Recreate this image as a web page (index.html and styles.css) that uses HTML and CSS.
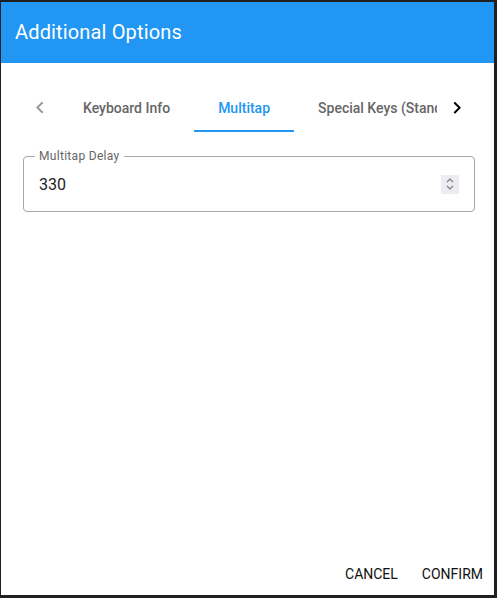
FILE: index.html
```html
<!DOCTYPE html>
<html>
<head>
<meta charset="utf-8">
<link rel="stylesheet" href="styles.css">
</head>
<body>
<div class="dialog">
  <header class="title-bar">
    <h2 class="title">Additional Options</h2>
  </header>
  <div class="content">
    <div class="tabs">
      <div class="scroll-btn disabled">
        <svg width="24" height="24" viewBox="0 0 24 24"><path d="M15.41 16.09l-4.58-4.59 4.58-4.59L14 5.5l-6 6 6 6z" fill="currentColor"/></svg>
      </div>
      <div class="tab-viewport">
        <div class="tab-list">
          <div class="tab">Keyboard Info</div>
          <div class="tab active">Multitap</div>
          <div class="tab">Special Keys (Standard)</div>
        </div>
      </div>
      <div class="scroll-btn">
        <svg width="24" height="24" viewBox="0 0 24 24"><path d="M8.59 16.34l4.58-4.59-4.58-4.59L10 5.75l6 6-6 6z" fill="currentColor"/></svg>
      </div>
    </div>
    <div class="field">
      <span class="field-label">Multitap Delay</span>
      <span class="field-value">330</span>
      <span class="spinner">
        <svg width="10" height="16" viewBox="0 0 10 16"><path d="M2 6L5 3L8 6" fill="none" stroke="#7a7a80" stroke-width="1.2"/><path d="M2 10L5 13L8 10" fill="none" stroke="#7a7a80" stroke-width="1.2"/></svg>
      </span>
    </div>
  </div>
  <footer class="actions">
    <button class="btn">Cancel</button>
    <button class="btn">Confirm</button>
  </footer>
</div>
</body>
</html>
```

FILE: styles.css
```css
* { box-sizing: border-box; }
html, body { margin: 0; padding: 0; background: #fff; }
body { font-family: Roboto, "Noto Sans", sans-serif; }

.dialog {
  width: 497px;
  height: 598px;
  border-style: solid;
  border-color: #1f1f1f;
  border-width: 2px 3px 3px 1px;
  display: flex;
  flex-direction: column;
  background: #fff;
}

.title-bar {
  background: #2196f3;
  height: 61px;
  padding-left: 14px;
  padding-bottom: 2px;
  display: flex;
  align-items: center;
}
.title {
  margin: 0;
  color: #fff;
  font-size: 20px;
  font-weight: 400;
  line-height: 24px;
  letter-spacing: 0.15px;
}

.content {
  flex: 1;
  padding: 21px 17px 0 18px;
}

.tabs {
  display: flex;
  height: 48px;
}
.scroll-btn {
  width: 40px;
  flex: none;
  display: flex;
  align-items: center;
  justify-content: center;
  color: #000;
}
.scroll-btn.disabled { color: #9a9a9a; padding-left: 1px; }
.tab-viewport {
  flex: 1;
  overflow: hidden;
}
.tab-list {
  display: flex;
  height: 48px;
}
.tab {
  flex: none;
  padding: 0 24px;
  height: 48px;
  display: flex;
  align-items: center;
  font-size: 14px;
  font-weight: 500;
  color: #666;
  white-space: nowrap;
  border-bottom: 2px solid transparent;
  padding-top: 2px;
}
.tab.active {
  color: #2196f3;
  border-bottom-color: #2196f3;
}

.field {
  position: relative;
  margin: 24px 2px 0 4px;
  height: 56px;
  border: 1px solid #a8a8a8;
  border-radius: 4px;
  display: flex;
  align-items: center;
  padding: 0 15px 0 15px;
}
.field-label {
  position: absolute;
  left: 11px;
  top: -8px;
  padding: 0 4px;
  background: #fff;
  font-size: 12px;
  line-height: 14px;
  color: #666;
  letter-spacing: 0.3px;
}
.field-value {
  flex: 1;
  font-size: 16px;
  color: #222;
  padding-top: 1px;
}
.spinner {
  width: 18px;
  height: 19px;
  background: #ededf1;
  display: flex;
  align-items: center;
  justify-content: center;
}

.actions {
  display: flex;
  justify-content: flex-end;
  gap: 8px;
  padding: 0 3px 3px 0;
}
.btn {
  background: none;
  border: none;
  font-family: Roboto, "Noto Sans", sans-serif;
  font-size: 14px;
  font-weight: 400;
  text-transform: uppercase;
  color: #111;
  padding: 6px 8px;
  min-width: 64px;
  height: 36px;
  letter-spacing: 0;
}
```
